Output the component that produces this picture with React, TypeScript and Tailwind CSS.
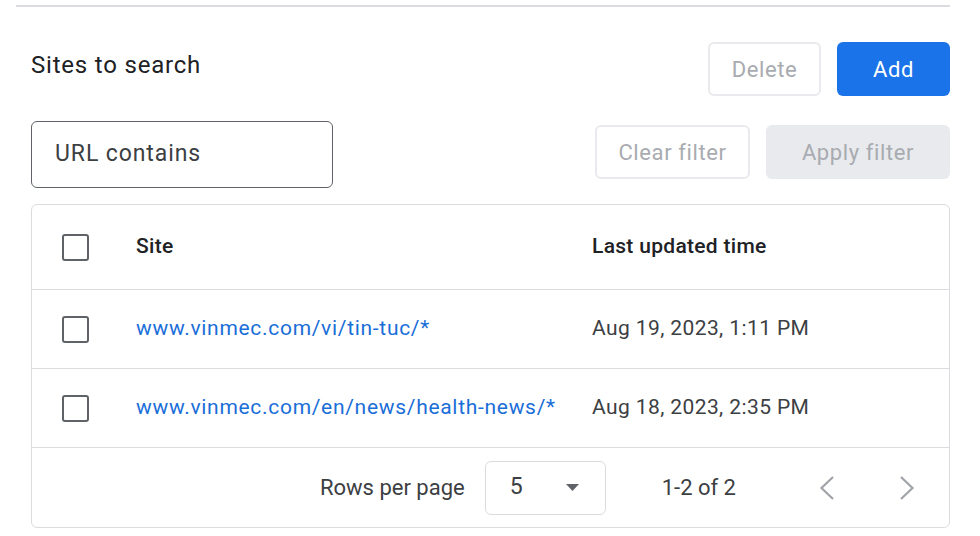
import React from 'react';

const rows = [
  { site: 'www.vinmec.com/vi/tin-tuc/*', time: 'Aug 19, 2023, 1:11 PM' },
  { site: 'www.vinmec.com/en/news/health-news/*', time: 'Aug 18, 2023, 2:35 PM' },
];

function Checkbox() {
  return <div className="h-[27px] w-[27px] rounded-[3px] border-[2.5px] border-[#5f6368] bg-white" />;
}

function Chevron({ dir }: { dir: 'left' | 'right' }) {
  return (
    <svg width="18" height="28" viewBox="0 0 18 28" fill="none">
      <path
        d={dir === 'left' ? 'M15 3 L3.5 14 L15 25' : 'M3 3 L14.5 14 L3 25'}
        stroke="#a0a3a8"
        strokeWidth="2.2"
      />
    </svg>
  );
}

export default function App() {
  return (
    <div className="h-[536px] w-[980px] overflow-hidden bg-white font-['Roboto',sans-serif] text-[#202124]">
      <div className="mx-4 mr-[30px] mt-[5px] h-[2px] bg-[#dadce0]" />

      <div className="ml-[31px] mr-[30px] mt-[35px] flex items-start justify-between">
        <h2 className="mt-[5px] text-[24px] tracking-[0.8px] text-[#202124]">Sites to search</h2>
        <div className="flex gap-4">
          <button className="h-[54px] w-[113px] rounded-[6px] border-2 border-[#e8eaed] text-[22px] tracking-[0.6px] text-[#a8abb0]">
            Delete
          </button>
          <button className="h-[54px] w-[113px] rounded-[6px] bg-[#1a73e8] text-[22px] tracking-[0.6px] text-white">
            Add
          </button>
        </div>
      </div>

      <div className="ml-[31px] mr-[30px] mt-[25px] flex items-start justify-between">
        <div className="flex h-[67px] w-[302px] items-center rounded-[6px] border border-[#5f6368] pl-[23px] text-[23px] tracking-[0.9px] text-[#3c4043]">
          URL contains
        </div>
        <div className="mt-[4px] flex gap-4">
          <button className="h-[54px] w-[155px] rounded-[6px] border-2 border-[#e8eaed] text-[22px] tracking-[0.6px] text-[#a8abb0]">
            Clear filter
          </button>
          <button className="h-[54px] w-[184px] rounded-[6px] bg-[#e8eaed] text-[22px] tracking-[0.6px] text-[#a8abb0]">
            Apply filter
          </button>
        </div>
      </div>

      <div className="ml-[31px] mr-[30px] mt-[16px] rounded-[6px] border border-[#dadce0]">
        <div className="flex h-[85px] items-center border-b border-[#dadce0]">
          <div className="w-[104px] pl-[30px]">
            <Checkbox />
          </div>
          <div className="w-[456px] text-[21px] font-medium tracking-[0.3px]">Site</div>
          <div className="text-[21px] font-medium tracking-[0.3px]">Last updated time</div>
        </div>
        {rows.map((r) => (
          <div key={r.site} className="flex h-[79px] items-center border-b border-[#dadce0]">
            <div className="w-[104px] pl-[30px]">
              <Checkbox />
            </div>
            <div className="w-[456px] text-[21px] tracking-[0.7px] text-[#1a6ed8]">{r.site}</div>
            <div className="text-[21px] tracking-[0.4px] text-[#3c4043]">{r.time}</div>
          </div>
        ))}
        <div className="flex h-[79px] items-center justify-end pr-[33px] text-[22px] text-[#3c4043]">
          <span>Rows per page</span>
          <div className="ml-[20px] flex h-[54px] w-[121px] items-center justify-between rounded-[6px] border border-[#dadce0] pl-[24px] pr-[26px]">
            <span className="text-[23px]">5</span>
            <svg width="13" height="7" viewBox="0 0 13 7">
              <path d="M0 0 L13 0 L6.5 7 Z" fill="#5f6368" />
            </svg>
          </div>
          <span className="ml-[56px]">1-2 of 2</span>
          <div className="ml-[82px] flex gap-[62px]">
            <Chevron dir="left" />
            <Chevron dir="right" />
          </div>
        </div>
      </div>
    </div>
  );
}
